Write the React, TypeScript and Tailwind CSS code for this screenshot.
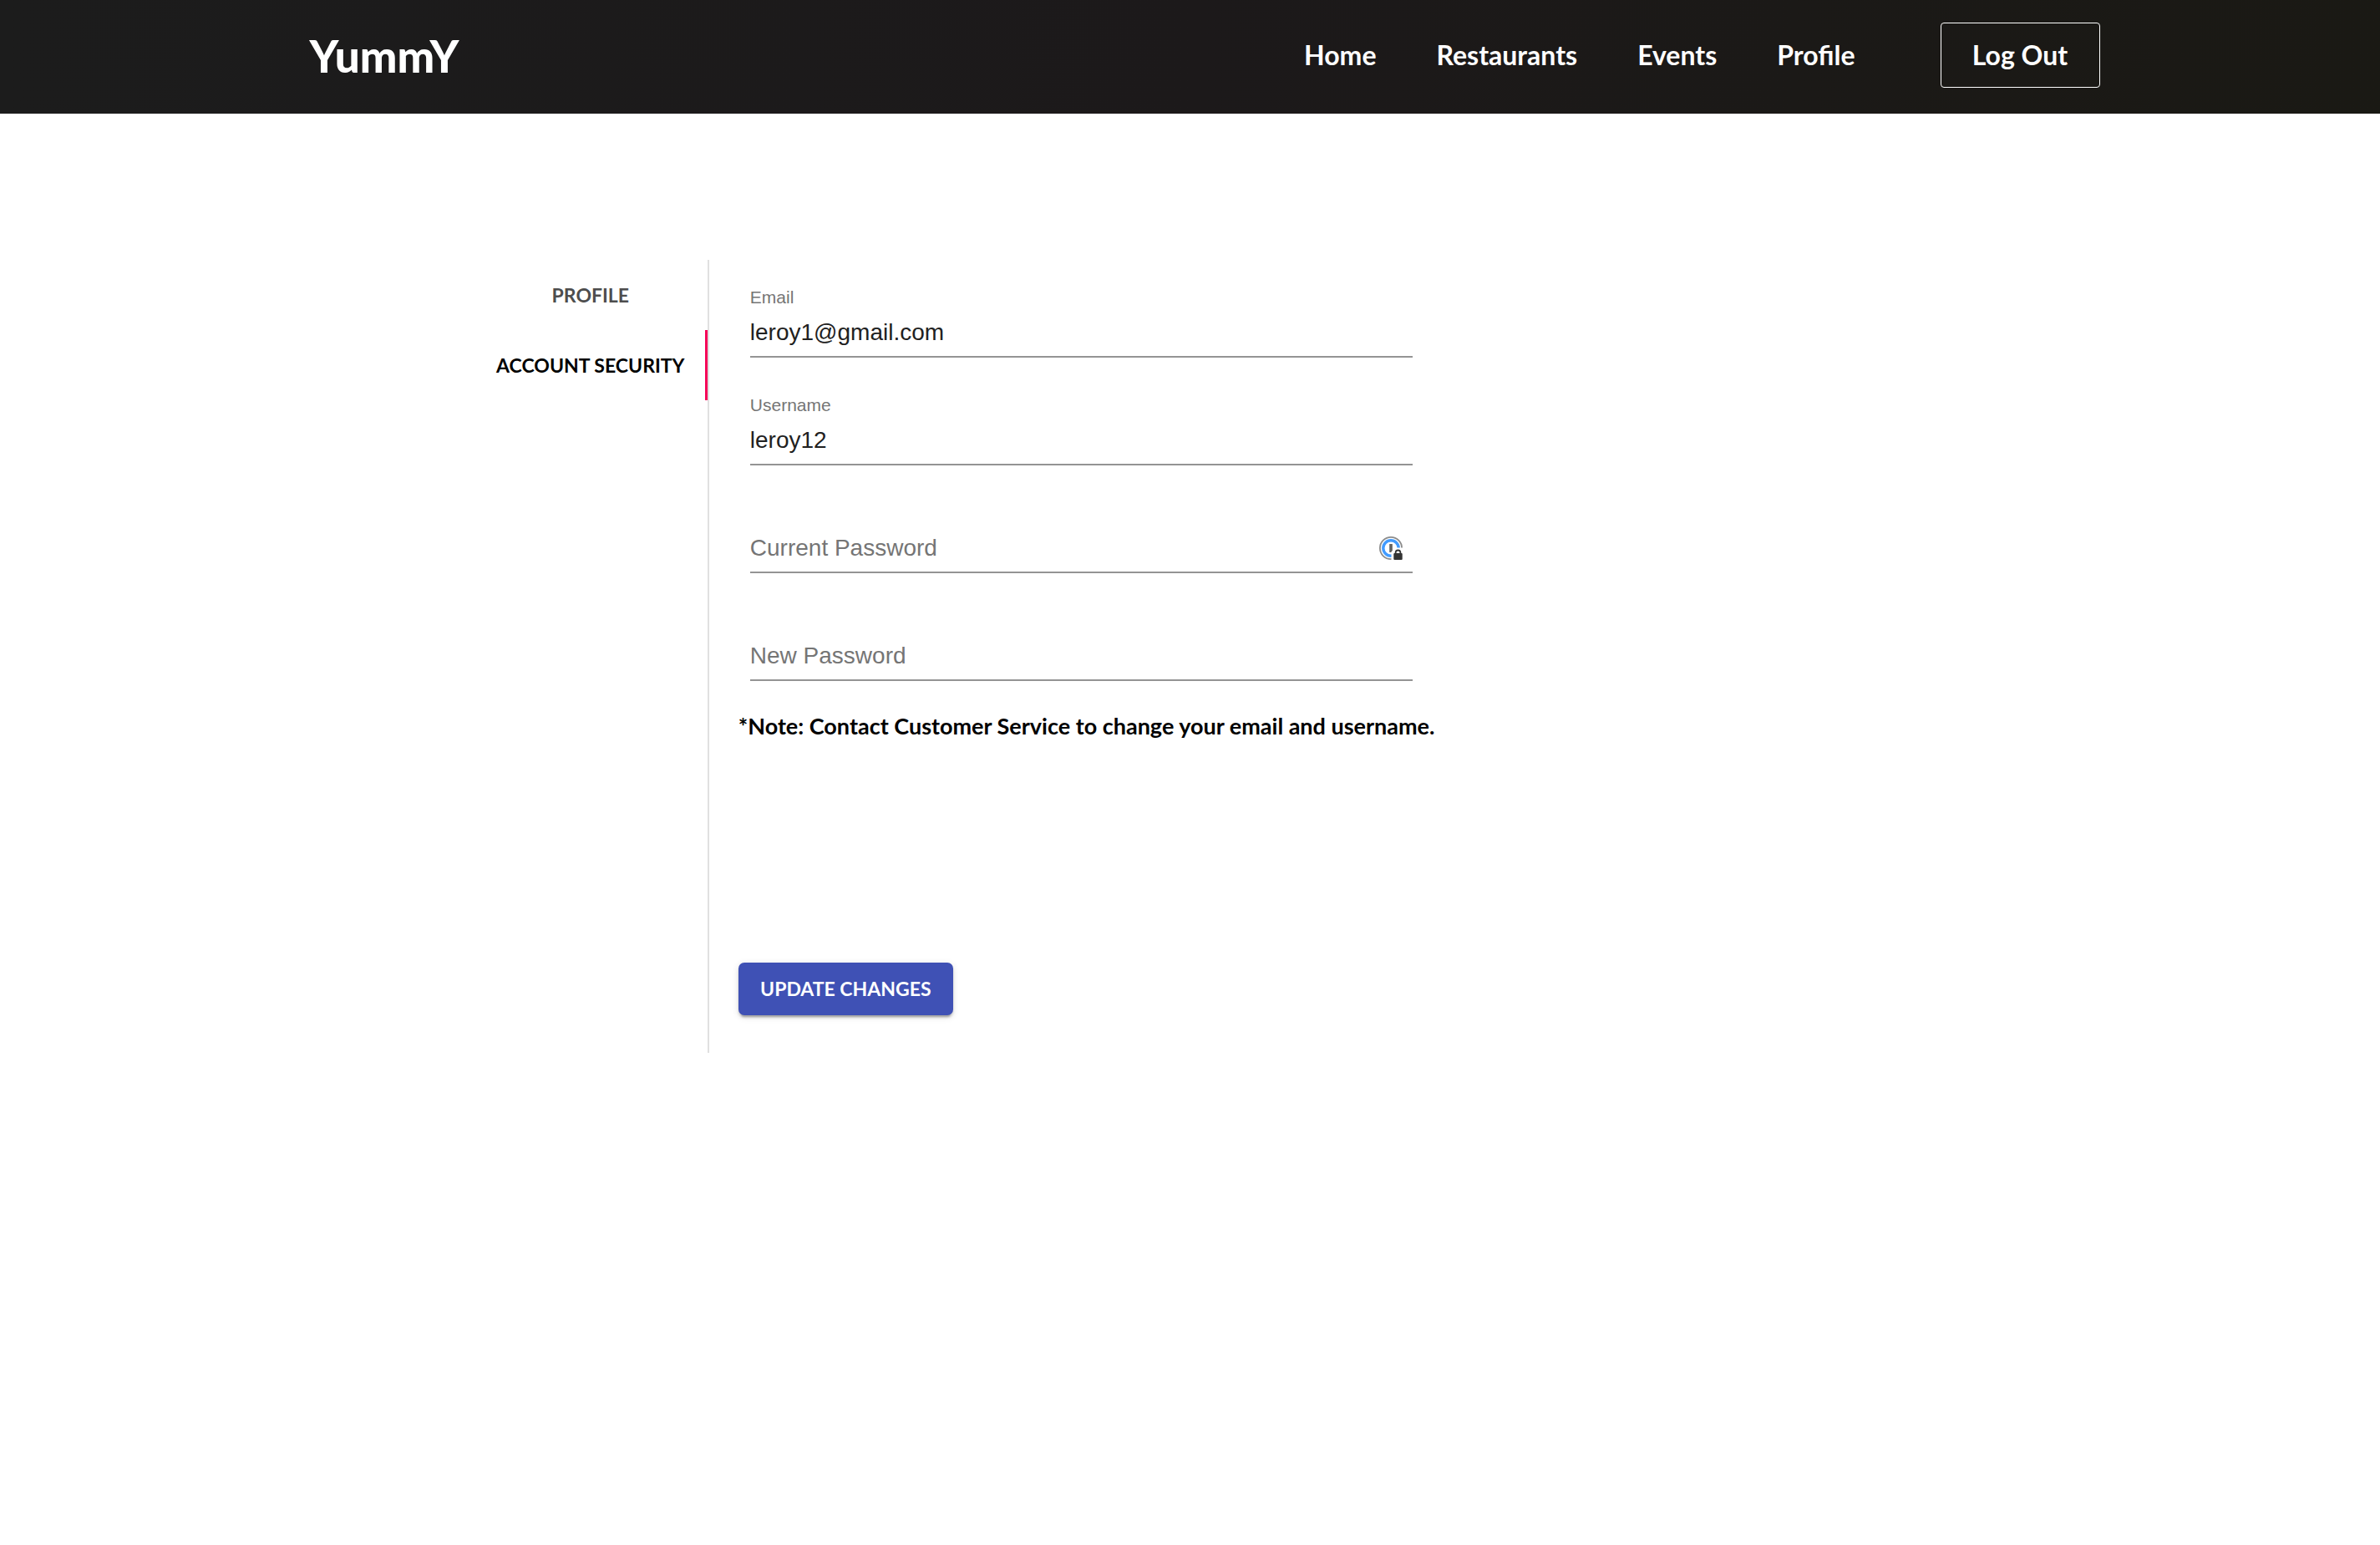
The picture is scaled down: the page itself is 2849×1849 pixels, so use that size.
import React, { useState } from "react";

const navLinks = ["Home", "Restaurants", "Events", "Profile"];
const tabs = ["Profile", "Account Security"];

function LockedKeyIcon() {
  return (
    <svg viewBox="0 0 28 28" className="size-7" aria-hidden="true">
      <circle cx="14" cy="14" r="13.1" fill="#fff" stroke="#8c8c8c" strokeWidth="1.8" />
      <circle cx="14" cy="14" r="9.2" fill="none" stroke="#429bff" strokeWidth="3.4" />
      <rect x="12.2" y="9" width="3.6" height="10" fill="#616161" />
      <path d="M14.500 28.500V18.500L19 13.500H28.500V28.500Z" fill="#fff" />
      <path d="M19.600 21v-1.600a2.900 2.900 0 0 1 5.800 0V21" fill="none" stroke="#333" strokeWidth="1.800" />
      <rect x="17.300" y="20" width="10.400" height="8" rx="1" fill="#333" />
    </svg>
  );
}

type FieldProps = {
  id: string;
  label: string;
  type?: string;
  initial?: string;
  icon?: React.ReactNode;
};

function Field({ id, label, type = "text", initial = "", icon }: FieldProps) {
  const [value, setValue] = useState(initial);
  return (
    <div className="relative pt-6">
      <label
        htmlFor={id}
        className={
          value !== ""
            ? "pointer-events-none absolute top-0 left-0 text-[21px] leading-5 text-[#757575]"
            : "pointer-events-none absolute top-6 left-0 text-[28px] leading-[56px] text-[#757575]"
        }
      >
        {label}
      </label>
      <div className="flex h-[58px] items-center border-b-2 border-[#949494]">
        <input
          id={id}
          type={type}
          value={value}
          onChange={(e) => setValue(e.target.value)}
          className="h-full min-w-0 flex-1 bg-transparent text-[28px] text-[#212121] outline-none"
        />
        {icon && <span className="mr-3">{icon}</span>}
      </div>
    </div>
  );
}

export default function App() {
  const [active, setActive] = useState("Account Security");

  return (
    <div className="min-h-screen bg-white font-['Lato',sans-serif] font-bold text-black">
      <header className="bg-linear-to-r from-[#1c1c1c] via-[#1c191a] to-[#1a1914] text-white">
        <div className="mx-auto flex h-[136px] max-w-[2210px] items-center justify-between pr-4 pb-1 pl-[51px]">
          <a href="#home" className="text-[53px] leading-none font-black">
            YummY
          </a>
          <nav className="flex items-center text-[32px]">
            <ul className="flex gap-[72px]">
              {navLinks.map((name) => (
                <li key={name}>
                  <a href={"#" + name.toLowerCase()}>{name}</a>
                </li>
              ))}
            </ul>
            <button
              type="button"
              className="ml-[102px] flex h-[78px] w-[191px] items-center justify-center rounded border border-white"
            >
              Log Out
            </button>
          </nav>
        </div>
      </header>

      <main className="ml-[20%] flex pt-[175px]">
        <div
          role="tablist"
          aria-orientation="vertical"
          className="flex w-[279px] flex-col border-r-2 border-[#e0e0e0]"
        >
          {tabs.map((name) => (
            <button
              key={name}
              type="button"
              role="tab"
              aria-selected={active === name}
              onClick={() => setActive(name)}
              className={
                active === name
                  ? "h-[84px] border-r-3 border-[#f50057] text-[23px] uppercase"
                  : "h-[84px] border-r-3 border-transparent text-[23px] text-[#4d4d4d] uppercase"
              }
            >
              {name}
            </button>
          ))}
        </div>

        <form
          className="flex flex-col items-start px-[35px] pt-[35px] pb-[45px]"
          onSubmit={(e) => e.preventDefault()}
        >
          <div className="ml-[14px] flex w-[793px] flex-col gap-[47px] font-['Liberation_Sans',sans-serif] font-normal">
            <Field id="email" label="Email" initial="leroy1@gmail.com" />
            <Field id="username" label="Username" initial="leroy12" />
            <Field id="current" label="Current Password" type="password" icon={<LockedKeyIcon />} />
            <Field id="new" label="New Password" type="password" />
          </div>
          <p className="mt-9 text-[27px] leading-9 whitespace-nowrap">
            *Note: Contact Customer Service to change your email and username.
          </p>
          <button
            type="submit"
            className="mt-[265px] flex h-[63px] w-[257px] items-center justify-center rounded-[7px] bg-[#3f51b5] text-[23px] text-white uppercase shadow-[0_5px_2px_-3px_rgba(0,0,0,0.2),0_3px_3px_0_rgba(0,0,0,0.14),0_2px_9px_0_rgba(0,0,0,0.12)]"
          >
            Update Changes
          </button>
        </form>
      </main>
    </div>
  );
}
